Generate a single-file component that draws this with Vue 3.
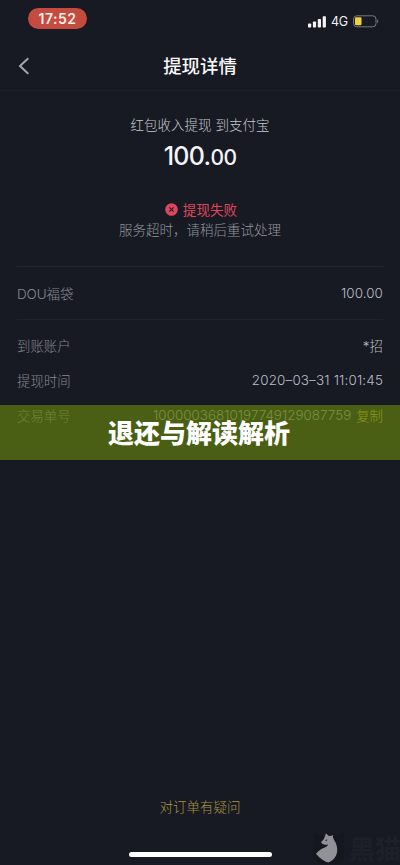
<script setup>
const account = [
  { label: '到账账户', value: '*招' },
  { label: '提现时间', value: '2020–03–31 11:01:45', date: true }
]
</script>

<template>
  <main class="screen">
    <header class="status">
      <span class="clock">17:52</span>
      <div class="signals">
        <svg class="bars" width="18" height="12" viewBox="0 0 18 12" fill="#f5f5f6">
          <rect x="0" y="7.5" width="3.2" height="4" rx="0.7" />
          <rect x="4.9" y="5.5" width="3.2" height="6" rx="0.7" />
          <rect x="9.8" y="3" width="3.2" height="8.5" rx="0.7" />
          <rect x="14.7" y="0.3" width="3.2" height="11.2" rx="0.7" />
        </svg>
        <span class="network">4G</span>
        <svg width="26" height="13" viewBox="0 0 26 13">
          <rect x="0.6" y="0.8" width="22.4" height="11" rx="3.2" fill="none" stroke="#777a7e" />
          <rect x="2" y="2.3" width="6.5" height="8" rx="1.2" fill="#f0cf43" />
          <path d="M24.2 4.5c1.5.5 1.5 3.1 0 3.6z" fill="#777a7e" />
        </svg>
      </div>
    </header>

    <nav class="nav">
      <svg class="back" width="12" height="18" viewBox="0 0 12 18" fill="none" stroke="#a5a6ac" stroke-width="2">
        <path d="M10.3 1.2 2 9l8.3 7.8" />
      </svg>
      <h1>提现详情</h1>
    </nav>

    <section class="summary">
      <p class="source">红包收入提现 到支付宝</p>
      <p class="amount">100.<span>00</span></p>
      <p class="failed">
        <svg width="13" height="13" viewBox="0 0 13 13">
          <circle cx="6.5" cy="6.5" r="6.3" fill="#dc475c" />
          <path d="m4.4 4.4 4.2 4.2m0-4.2L4.4 8.6" stroke="#321d29" stroke-width="1.3" />
        </svg>
        提现失败
      </p>
      <p class="reason">服务超时，请稍后重试处理</p>
    </section>

    <section class="details">
      <div class="row bag"><span class="label">DOU福袋</span><span class="value">100.00</span></div>
      <div class="account">
        <div v-for="item in account" :key="item.label" class="row">
          <span class="label">{{ item.label }}</span>
          <span class="value" :class="{ date: item.date }">{{ item.value }}</span>
        </div>
        <div class="row order">
          <span class="label">交易单号</span>
          <span class="value"><span class="number">10000036810197749129087759</span><span class="copy">复制</span></span>
        </div>
      </div>
    </section>

    <div class="banner">退还与解读解析</div>

    <footer class="footer">
      <span class="help">对订单有疑问</span>
      <span class="home"></span>
    </footer>

    <div class="watermark">
      <svg width="34" height="34" viewBox="0 0 34 34">
        <path d="M2 2l7 4h16l7-4v26l-6 6H7l-5-6z" fill="#15171e" />
        <path d="M14.4 3.8c1.1.5 1.8 1.7 2.5 2.2l2.6.2 2-.9c-.2 2 .1 3 1 4.7 2.6 4.2 3.8 8.2 3.1 12.2-.9 4.8-4 8.8-8.8 10.6-3.8-.8-8.4-4.2-12.4-8.8 2-2.6 5.3-4.7 8.3-6 2.2-1 3.5-2 3.8-3.3-2.4.6-4.8.2-6.3-1.2-.8-.7-.5-1.5.3-2.1 1.5-1.2 2.4-2.8 2.7-4.4z" transform="translate(-.5 -.3)" fill="#919298" />
        <path d="m13 10.2 2.3-1-.5 1.8z" fill="#1b1c23" />
      </svg>
      <span>黑猫</span>
    </div>
  </main>
</template>

<style>
body { background: #171a23; }
</style>

<style scoped>
.screen {
  position: relative;
  display: flex;
  flex-direction: column;
  width: 400px;
  height: 865px;
  overflow: hidden;
  background: #171a23;
  color: #b7b9bf;
  font-family: Inter, "Noto Sans CJK SC", sans-serif;
  font-size: 13.4px;
}
p, h1 { margin: 0; }
.status {
  display: flex;
  justify-content: space-between;
  box-sizing: border-box;
  height: 42px;
  padding: 8px 21px 0 28px;
}
.clock {
  box-sizing: border-box;
  width: 59px;
  height: 21px;
  border-radius: 11px;
  background: #c54b41;
  color: #fff1e6;
  font-size: 14px;
  font-weight: 600;
  line-height: 21px;
  text-align: center;
  letter-spacing: 0.5px;
}
.signals { display: flex; align-items: center; height: 27px; }
.network { width: 18px; margin: 0 4px 0 5px; color: #f0f0f2; font-size: 12.5px; letter-spacing: -0.2px; }
.nav {
  display: flex;
  align-items: center;
  justify-content: center;
  height: 48px;
  border-bottom: 1px solid #1d2028;
}
.back { margin-left: 18px; }
.nav h1 {
  flex: 1;
  margin-right: 30px;
  color: #f8f8f9;
  font-size: 18.4px;
  font-weight: 500;
  line-height: 28px;
  text-align: center;
}
.summary {
  display: flex;
  flex-direction: column;
  align-items: center;
  box-sizing: border-box;
  height: 175px;
  padding-top: 24px;
}
.source { height: 20px; line-height: 21px; font-size: 13.5px; font-weight: 300; color: #c6c8ce; }
.amount { height: 40px; color: #f4f4f7; font-size: 25px; font-weight: 450; line-height: 42px; letter-spacing: -0.7px; }
.amount span { font-size: 21px; letter-spacing: -0.6px; }
.failed { display: flex; align-items: center; gap: 5px; height: 20px; margin: 24px 0 1px 2px; color: #dc475c; font-size: 13.6px; }
.reason { height: 20px; line-height: 21px; color: #94969d; font-size: 13.5px; font-weight: 300; }
.details {
  height: 139px;
  margin: 0 17px;
  border-top: 1px solid #22252d;
}
.row { display: flex; align-items: center; justify-content: space-between; height: 35px; font-weight: 300; }
.label { color: #868890; }
.value { color: #bbbdc3; letter-spacing: 0.1px; }
.bag { height: 51px; padding-bottom: 1px; border-bottom: 1px solid #20232b; }
.bag .label { font-size: 13.5px; letter-spacing: -0.1px; }
.account { padding-top: 7px; }
.date { letter-spacing: 0.17px; }
.order .value { display: flex; align-items: center; gap: 5px; }
.number { color: #a0a2a8; letter-spacing: 0.02px; }
.copy { color: #d5bb38; letter-spacing: 0; }
.banner {
  position: absolute;
  top: 405px;
  left: 0;
  width: 400px;
  height: 55px;
  background: rgba(102, 132, 10, 0.65);
  color: #fff;
  font-family: "Noto Sans CJK SC", sans-serif;
  font-size: 26px;
  font-weight: 900;
  line-height: 54px;
  text-align: center;
  text-indent: -2px;
}
.footer { display: flex; flex-direction: column; align-items: center; margin-top: auto; padding-bottom: 8px; }
.help { height: 22px; color: #a8943f; font-size: 13.5px; font-weight: 300; line-height: 22px; }
.home { width: 143px; height: 5px; margin-top: 34px; border-radius: 3px; background: #fff; }
.watermark {
  position: absolute;
  top: 829px;
  left: 312px;
  display: flex;
  align-items: center;
  gap: 3px;
  height: 36px;
  color: #1e2027;
  font-size: 26px;
  font-weight: 700;
  white-space: nowrap;
}
</style>
